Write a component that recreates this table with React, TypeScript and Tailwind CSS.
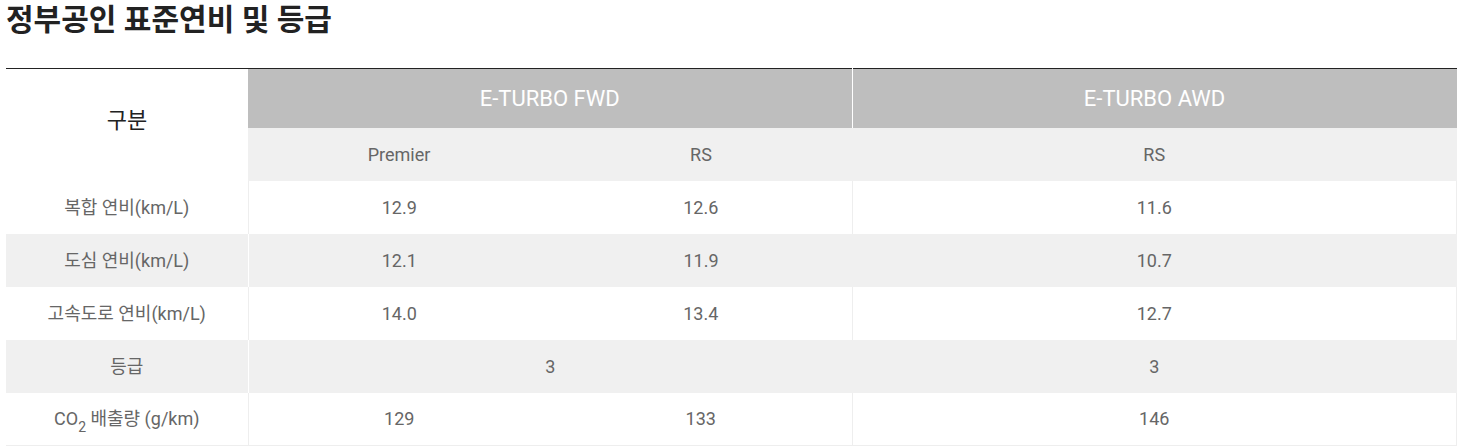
import React from "react";

type Row = {
  label: React.ReactNode;
  premier: string;
  rs: string;
  awd: string;
  gray?: boolean;
  merged?: boolean;
};

const rows: Row[] = [
  { label: "복합 연비(km/L)", premier: "12.9", rs: "12.6", awd: "11.6" },
  { label: "도심 연비(km/L)", premier: "12.1", rs: "11.9", awd: "10.7", gray: true },
  { label: "고속도로 연비(km/L)", premier: "14.0", rs: "13.4", awd: "12.7" },
  { label: "등급", premier: "3", rs: "", awd: "3", gray: true, merged: true },
  {
    label: (
      <>
        CO<sub className="text-[14px] align-[-3px] leading-none">2</sub> 배출량 (g/km)
      </>
    ),
    premier: "129",
    rs: "133",
    awd: "146",
  },
];

export default function App() {
  return (
    <div className="bg-white w-[1461px] h-[448px] px-[6px] font-['Roboto','Noto_Sans_CJK_KR',sans-serif] overflow-hidden">
      <h2 className="text-[30px] leading-[40px] font-bold text-[#222]">정부공인 표준연비 및 등급</h2>

      <table className="mt-[28px] w-[1451px] border-collapse table-fixed border-t border-[#222] text-[18px] text-[#666]">
        <colgroup>
          <col className="w-[242px]" />
          <col className="w-[302px]" />
          <col className="w-[302px]" />
          <col />
        </colgroup>
        <thead>
          <tr className="h-[59px]">
            <th rowSpan={2} className="bg-white font-normal text-[22px] text-[#222] align-middle pb-[8px]">
              구분
            </th>
            <th colSpan={2} className="bg-[#bebebe] font-normal text-[22px] text-white border-r border-white">
              E-TURBO FWD
            </th>
            <th className="bg-[#bebebe] font-normal text-[22px] text-white">E-TURBO AWD</th>
          </tr>
          <tr className="h-[53px] bg-[#f0f0f0]">
            <th className="font-normal">Premier</th>
            <th className="font-normal">RS</th>
            <th className="font-normal">RS</th>
          </tr>
        </thead>
        <tbody>
          {rows.map((r, i) => {
            const line = r.gray ? "border-white" : "border-[#eee]";
            const bg = r.gray ? "bg-[#f0f0f0]" : "bg-white";
            return (
              <tr key={i} className={`h-[53px] text-center ${bg}`}>
                <td className={`border-r ${line}`}>{r.label}</td>
                {r.merged ? (
                  <td colSpan={2}>{r.premier}</td>
                ) : (
                  <>
                    <td>{r.premier}</td>
                    <td className={r.gray ? "" : "border-r border-[#eee]"}>{r.rs}</td>
                  </>
                )}
                <td className={r.gray ? "" : "border-r border-[#eee]"}>{r.awd}</td>
              </tr>
            );
          })}
          <tr>
            <td colSpan={4} className="h-0 border-t border-[#eee] p-0" />
          </tr>
        </tbody>
      </table>
    </div>
  );
}
